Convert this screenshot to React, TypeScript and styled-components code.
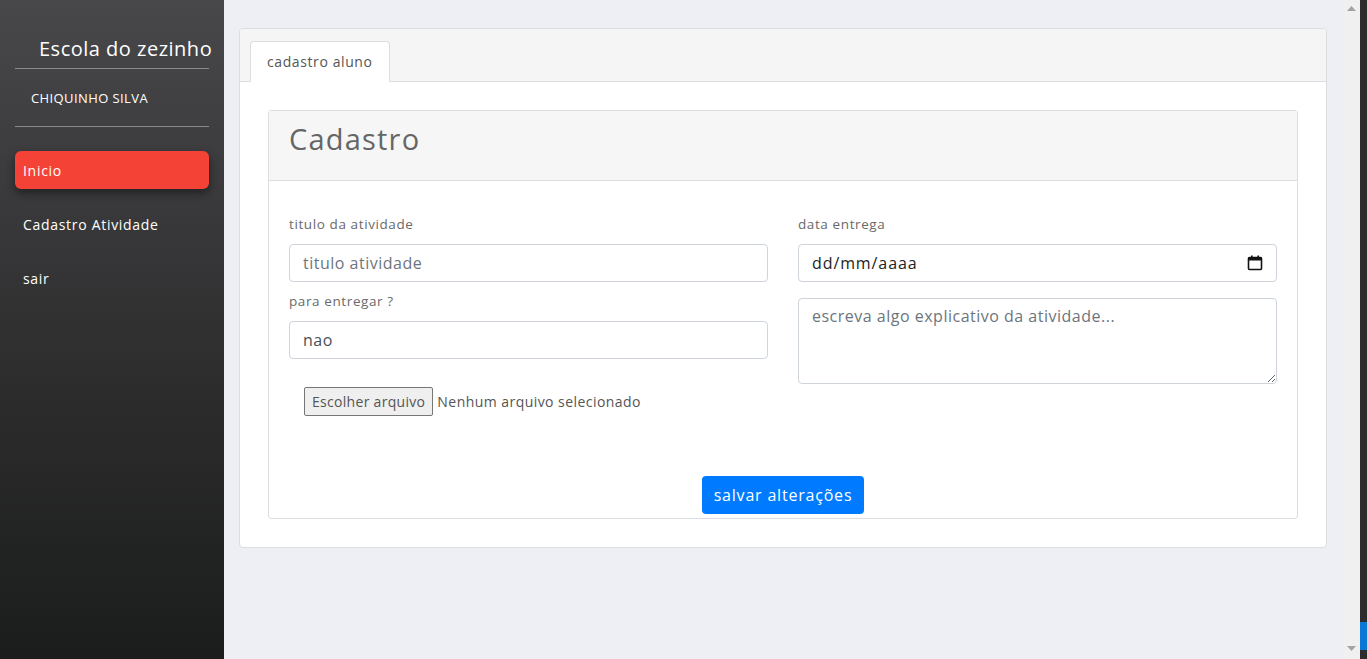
import React from 'react'
import styled, { createGlobalStyle } from 'styled-components'

const GlobalStyle = createGlobalStyle`
  html, body {
    margin: 0;
    padding: 0;
    height: 100%;
    overflow: hidden;
  }
  body {
    font-family: 'Open Sans', 'Noto Sans', sans-serif;
    background: #eeeff4;
  }
  * {
    box-sizing: border-box;
  }
`

const Page = styled.div`
  display: flex;
  width: 1367px;
  height: 659px;
`

const Sidebar = styled.aside`
  width: 224px;
  flex-shrink: 0;
  background: linear-gradient(180deg, #48484b 0%, #2e2e2f 55%, #1b1c1c 100%);
  padding: 0 15px;
  display: flex;
  flex-direction: column;
`

const Brand = styled.div`
  padding: 37px 0 7px 24px;
  color: #fff;
  font-size: 20px;
  letter-spacing: 0.5px;
  line-height: 24px;
  white-space: nowrap;
`

const Divider = styled.hr`
  margin: 0;
  border: 0;
  border-top: 1px solid #8a8a8a;
`

const UserName = styled.div`
  padding: 20px 0 19px 16px;
  color: #fff;
  font-size: 13px;
  letter-spacing: 0.4px;
  line-height: 18px;
  text-transform: uppercase;
`

const Nav = styled.nav`
  display: flex;
  flex-direction: column;
  gap: 16px;
  padding-top: 24px;
`

const NavItem = styled.a<{ $active?: boolean }>`
  display: flex;
  align-items: center;
  height: 38px;
  padding: 0 8px;
  border-radius: 6px;
  color: #fff;
  font-size: 14px;
  letter-spacing: 0.7px;
  text-decoration: none;
  background: ${(p) => (p.$active ? '#f44336' : 'transparent')};
  box-shadow: ${(p) =>
    p.$active ? '0 4px 10px rgba(0, 0, 0, 0.45)' : 'none'};
`

const Main = styled.main`
  flex: 1;
  padding: 28px 16px 0 15px;
`

const Card = styled.section`
  background: #fff;
  border: 1px solid #dcdde0;
  border-radius: 4px;
  padding-bottom: 28px;
`

const TabBar = styled.div`
  display: flex;
  background: #f5f5f6;
  border-bottom: 1px solid #dcdde0;
  padding: 12px 10px 0;
  border-radius: 4px 4px 0 0;
`

const Tab = styled.div`
  height: 41px;
  margin-bottom: -1px;
  padding: 0 16px;
  display: flex;
  align-items: center;
  background: #fff;
  border: 1px solid #dcdde0;
  border-bottom-color: #fff;
  border-radius: 4px 4px 0 0;
  color: #555;
  font-size: 14px;
  letter-spacing: 0.6px;
`

const Inner = styled.div`
  margin: 28px 28px 0;
  border: 1px solid #dcdde0;
  border-radius: 3px;
`

const InnerHeader = styled.div`
  height: 70px;
  padding: 11px 20px 0;
  background: #f6f6f7;
  border-bottom: 1px solid #dcdde0;
  color: #666;
  font-size: 29px;
  letter-spacing: 1.2px;
  line-height: 34px;
`

const InnerBody = styled.div`
  padding: 33px 20px 4px;
`

const Row = styled.div`
  display: grid;
  grid-template-columns: 1fr 1fr;
  column-gap: 30px;
`

const Column = styled.div`
  display: flex;
  flex-direction: column;
`

const Label = styled.label`
  color: #6a6a6a;
  font-size: 13.5px;
  letter-spacing: 0.6px;
  line-height: 20px;
  margin-bottom: 10px;
`

const Field = styled.div`
  height: 38px;
  display: flex;
  align-items: center;
  justify-content: space-between;
  padding: 0 13px;
  border: 1px solid #ced4da;
  border-radius: 4px;
  font-size: 16px;
  letter-spacing: 0.5px;
  color: #495057;
  margin-bottom: 9px;
`

const DateValue = styled.span`
  color: #222;
  letter-spacing: 0.9px;
`

const Placeholder = styled.span`
  color: #6c757d;
`

const TextArea = styled.textarea`
  height: 86px;
  padding: 6px 13px;
  border: 1px solid #ced4da;
  border-radius: 4px;
  font-family: 'Open Sans', 'Noto Sans', sans-serif;
  font-size: 16px;
  letter-spacing: 0.5px;
  color: #495057;
  resize: vertical;
  &::placeholder {
    color: #6c757d;
  }
`

const FileRow = styled.div`
  display: flex;
  align-items: center;
  gap: 4px;
  padding: 19px 0 0 15px;
  font-size: 14px;
  letter-spacing: 0.45px;
  color: #555;
`

const FileButton = styled.button`
  height: 29px;
  padding: 0 7px;
  background: #efefef;
  border: 1px solid #767676;
  border-radius: 2px;
  font-family: 'Open Sans', 'Noto Sans', sans-serif;
  font-size: 14px;
  letter-spacing: 0.3px;
  color: #555;
`

const Actions = styled.div`
  display: flex;
  justify-content: center;
  padding-top: 60px;
`

const PrimaryButton = styled.button`
  height: 38px;
  padding: 0 12px;
  background: #007bff;
  border: 0;
  border-radius: 4px;
  color: #fff;
  font-family: 'Open Sans', 'Noto Sans', sans-serif;
  font-size: 16px;
  letter-spacing: 0.8px;
`

const ScrollTrack = styled.div`
  width: 17px;
  flex-shrink: 0;
  background: #f0f0f0;
  display: flex;
  flex-direction: column;
  justify-content: space-between;
  align-items: center;
  padding: 6px 0 8px;
`

const Edge = styled.div`
  width: 7px;
  flex-shrink: 0;
  background: #2d2d2d;
  display: flex;
  flex-direction: column;
  justify-content: flex-end;
  padding-bottom: 9px;
`

const EdgeAccent = styled.div`
  height: 28px;
  background: #0a78d4;
`

const CalendarIcon = () => (
  <svg width="16" height="16" viewBox="0 0 16 16">
    <rect x="1.5" y="2.5" width="13" height="12" rx="1" fill="none" stroke="#111" strokeWidth="1.6" />
    <rect x="1.5" y="2.5" width="13" height="3" fill="#111" />
    <rect x="4" y="0.5" width="1.6" height="3" fill="#111" />
    <rect x="10.4" y="0.5" width="1.6" height="3" fill="#111" />
  </svg>
)

const Arrow = ({ down }: { down?: boolean }) => (
  <svg width="9" height="5" viewBox="0 0 9 5">
    <path d={down ? 'M0 0 H9 L4.5 5 Z' : 'M0 5 H9 L4.5 0 Z'} fill="#a3a3a3" />
  </svg>
)

export default function App() {
  return (
    <>
      <GlobalStyle />
      <Page>
        <Sidebar>
          <Brand>Escola do zezinho</Brand>
          <Divider />
          <UserName>Chiquinho Silva</UserName>
          <Divider />
          <Nav>
            <NavItem $active>Inicio</NavItem>
            <NavItem>Cadastro Atividade</NavItem>
            <NavItem>sair</NavItem>
          </Nav>
        </Sidebar>
        <Main>
          <Card>
            <TabBar>
              <Tab>cadastro aluno</Tab>
            </TabBar>
            <Inner>
              <InnerHeader>Cadastro</InnerHeader>
              <InnerBody>
                <Row>
                  <Column>
                    <Label>titulo da atividade</Label>
                    <Field>
                      <Placeholder>titulo atividade</Placeholder>
                    </Field>
                    <Label>para entregar ?</Label>
                    <Field>nao</Field>
                    <FileRow>
                      <FileButton>Escolher arquivo</FileButton>
                      <span>Nenhum arquivo selecionado</span>
                    </FileRow>
                  </Column>
                  <Column>
                    <Label>data entrega</Label>
                    <Field style={{ marginBottom: 16 }}>
                      <DateValue>dd/mm/aaaa</DateValue>
                      <CalendarIcon />
                    </Field>
                    <TextArea placeholder="escreva algo explicativo da atividade..." />
                  </Column>
                </Row>
                <Actions>
                  <PrimaryButton>salvar alterações</PrimaryButton>
                </Actions>
              </InnerBody>
            </Inner>
          </Card>
        </Main>
        <ScrollTrack>
          <Arrow />
          <Arrow down />
        </ScrollTrack>
        <Edge>
          <EdgeAccent />
        </Edge>
      </Page>
    </>
  )
}
